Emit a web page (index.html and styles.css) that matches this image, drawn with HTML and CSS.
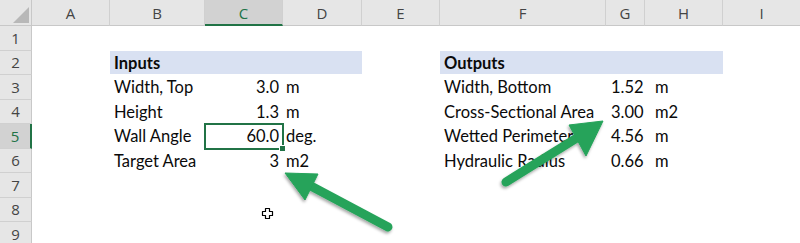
FILE: index.html
```html
<!DOCTYPE html>
<html>
<head>
<meta charset="utf-8">
<link rel="stylesheet" href="styles.css">
</head>
<body>
<div class="sheet">
  <div class="corner"><span class="tri"></span></div>
  <div class="colh">A</div>
  <div class="colh">B</div>
  <div class="colh sel">C</div>
  <div class="colh">D</div>
  <div class="colh">E</div>
  <div class="colh">F</div>
  <div class="colh">G</div>
  <div class="colh">H</div>
  <div class="colh last">I</div>

  <div class="rowh r1">1</div>

  <div class="rowh r2">2</div>
  <div class="band c-b r2">Inputs</div>
  <div class="band c-f r2">Outputs</div>

  <div class="rowh r3">3</div>
  <div class="cell c-b r3">Width, Top</div>
  <div class="cell num c-c r3">3.0</div>
  <div class="cell unit c-d r3">m</div>
  <div class="cell c-f r3">Width, Bottom</div>
  <div class="cell gval c-g r3">1.52</div>
  <div class="cell hunit c-h r3">m</div>

  <div class="rowh r4">4</div>
  <div class="cell c-b r4">Height</div>
  <div class="cell num c-c r4">1.3</div>
  <div class="cell unit c-d r4">m</div>
  <div class="cell c-f r4">Cross-Sectional Area</div>
  <div class="cell gval c-g r4">3.00</div>
  <div class="cell hunit c-h r4">m2</div>

  <div class="rowh sel r5">5</div>
  <div class="cell c-b r5">Wall Angle</div>
  <div class="cell num active c-c r5">60.0<span class="handle"></span></div>
  <div class="cell unit c-d r5">deg.</div>
  <div class="cell c-f r5">Wetted Perimeter</div>
  <div class="cell gval c-g r5">4.56</div>
  <div class="cell hunit c-h r5">m</div>

  <div class="rowh r6">6</div>
  <div class="cell c-b r6">Target Area</div>
  <div class="cell num c-c r6">3</div>
  <div class="cell unit c-d r6">m2</div>
  <div class="cell c-f r6">Hydraulic Radius</div>
  <div class="cell gval c-g r6">0.66</div>
  <div class="cell hunit c-h r6">m</div>

  <div class="rowh r7">7</div>
  <div class="rowh r8">8</div>
  <div class="rowh r9">9</div>
</div>

<svg class="overlay" width="800" height="243" viewBox="0 0 800 243">
  <defs>
    <filter id="sh" x="-20%" y="-20%" width="140%" height="140%">
      <feDropShadow dx="-1" dy="2" stdDeviation="1.4" flood-color="#000" flood-opacity="0.35"/>
    </filter>
  </defs>
  <g filter="url(#sh)" fill="#25A35A" stroke="#25A35A">
    <line x1="388" y1="227" x2="309" y2="185" stroke-width="9" stroke-linecap="round"/>
    <polygon points="285,173 318,174 305,200" stroke-width="1" stroke-linejoin="round"/>
    <line x1="506" y1="182" x2="580" y2="136" stroke-width="9" stroke-linecap="round"/>
    <polygon points="603,121 569,125 586,156" stroke-width="1" stroke-linejoin="round"/>
  </g>
  <path class="cursor" d="M265.5 208.5 h4 v3 h3 v4 h-3 v3 h-4 v-3 h-3 v-4 h3 z" fill="#fff" stroke="#000" stroke-width="1.2" stroke-linejoin="round"/>
</svg>
</body>
</html>
```

FILE: styles.css
```css
html, body {
  margin: 0;
  padding: 0;
  background: #fff;
  width: 800px;
  height: 243px;
  overflow: hidden;
}

.sheet {
  display: grid;
  grid-template-columns: 32px 78px 95px 78px 79px 78px 166px 39px 78px 77px;
  grid-template-rows: 26px repeat(9, 24.5px);
  font-family: Lato, "Liberation Sans", sans-serif;
  font-size: 16.5px;
  color: #0a0a0a;
}

.corner {
  grid-column: 1;
  grid-row: 1;
  background: #E6E6E6;
  border-right: 1px solid #C8C8C8;
  border-bottom: 1px solid #C8C8C8;
  position: relative;
}
.tri {
  position: absolute;
  right: 2px;
  bottom: 2px;
  width: 0;
  height: 0;
  border-left: 16px solid transparent;
  border-bottom: 16px solid #B8B8B8;
}

.colh {
  grid-row: 1;
  background: #E6E6E6;
  border-right: 1px solid #D0D0D0;
  border-bottom: 1px solid #C8C8C8;
  display: flex;
  align-items: center;
  justify-content: center;
  font-family: "Open Sans", "Noto Sans", sans-serif;
  font-size: 15px;
  color: #444;
  padding-top: 1px;
}
.colh.last { border-right: none; }
.colh.sel {
  background: #D2D2D2;
  color: #217346;
  border-bottom: 2px solid #217346;
}

.rowh {
  grid-column: 1;
  background: #E6E6E6;
  border-right: 1px solid #C8C8C8;
  border-bottom: 1px solid #D0D0D0;
  display: flex;
  align-items: center;
  justify-content: center;
  font-family: "Open Sans", "Noto Sans", sans-serif;
  font-size: 15px;
  color: #444;
}
.rowh.sel {
  background: #D2D2D2;
  color: #217346;
  border-right: 2px solid #217346;
}

.r1 { grid-row: 2; }
.r2 { grid-row: 3; }
.r3 { grid-row: 4; }
.r4 { grid-row: 5; }
.r5 { grid-row: 6; }
.r6 { grid-row: 7; }
.r7 { grid-row: 8; }
.r8 { grid-row: 9; }
.r9 { grid-row: 10; }

.c-b { grid-column: 3; }
.c-c { grid-column: 4; }
.c-d { grid-column: 5; }
.c-f { grid-column: 7; }
.c-g { grid-column: 8; }
.c-h { grid-column: 9; }

.band {
  grid-column-end: span 3;
  background: #D9E1F2;
  font-weight: bold;
  line-height: 24.5px;
  padding-left: 4px;
  border-bottom: 1px solid #fff;
}

.cell {
  line-height: 24.5px;
  white-space: nowrap;
  padding-left: 4px;
}
.num {
  text-align: right;
  padding-right: 4px;
  padding-left: 0;
}
.unit { padding-left: 3px; }
.gval { padding-left: 5px; overflow: visible; }
.hunit { padding-left: 10px; }

.active {
  position: relative;
  outline: 2px solid #217346;
  outline-offset: -1px;
  z-index: 1;
}
.handle {
  position: absolute;
  right: -3px;
  bottom: -3px;
  width: 5px;
  height: 5px;
  background: #217346;
  border: 1px solid #fff;
}

.overlay {
  position: absolute;
  left: 0;
  top: 0;
  pointer-events: none;
}
```
